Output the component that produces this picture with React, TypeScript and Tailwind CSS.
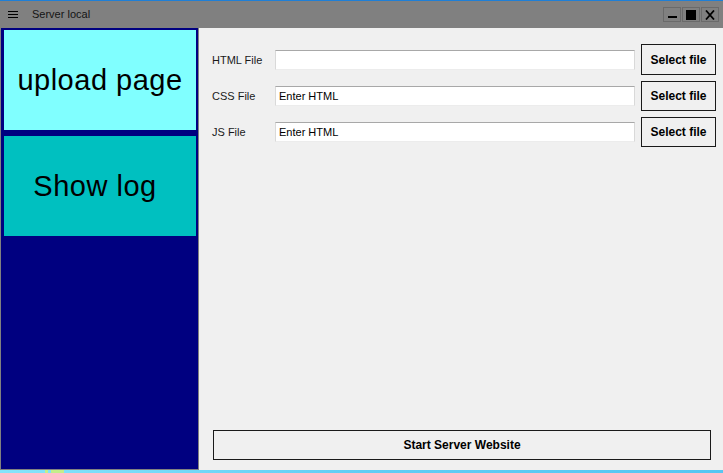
import React from "react";

function Row({ label, value, h }: { label: string; value?: string; h: string }) {
  return (
    <div className={"flex items-center " + h}>
      <div className="w-[63px] text-[11px] text-[#1a1a1a] leading-none pt-[1px]">{label}</div>
      <div className="w-[360px] h-[20px] bg-white border border-t-[#a8a8a8] border-x-[#d9d9d9] border-b-[#ececec] flex items-center pl-[3px] text-[11px] text-black leading-none">
        {value}
      </div>
      <button className="ml-[6px] w-[75px] h-full border border-[#1a1a1a] bg-[#f0f0f0] text-[12px] font-bold text-black leading-none">
        Select file
      </button>
    </div>
  );
}

export default function App() {
  return (
    <div
      className="w-[723px] h-[473px] flex flex-col bg-[#f0f0f0] overflow-hidden"
      style={{ fontFamily: '"Liberation Sans", Arial, sans-serif' }}
    >
      <div className="h-[1px] bg-[#1f7fd6]" />
      {/* Title bar */}
      <div className="h-[27px] bg-[#808080] flex items-center relative">
        <div className="ml-[8px] w-[10px] flex flex-col gap-[2px]">
          <div className="h-[1px] bg-black" />
          <div className="h-[1px] bg-black" />
          <div className="h-[1px] bg-black" />
        </div>
        <div className="ml-[14px] text-[11px] text-[#141414] leading-none">Server local</div>
        <div className="ml-auto mr-[4px] flex gap-[1px] self-start mt-[6px]">
          <div className="w-[18px] h-[15px] border border-[#6a6a6a] flex items-end justify-center pb-[3px]">
            <div className="w-[9px] h-[2px] bg-black" />
          </div>
          <div className="w-[18px] h-[15px] border border-[#6a6a6a] flex items-center justify-center">
            <div className="w-[10px] h-[10px] bg-black" />
          </div>
          <div className="w-[18px] h-[15px] border border-[#6a6a6a] flex items-center justify-center">
            <svg width="10" height="10" viewBox="0 0 10 10">
              <path d="M1 0.5 L9 9.5 M9 0.5 L1 9.5" stroke="#000" strokeWidth="1.8" />
            </svg>
          </div>
        </div>
      </div>
      {/* Body */}
      <div className="flex h-[442px]">
        <div className="w-[199px] h-full bg-[#000080] border-x border-b border-[#808080] pt-[2px] pl-[3px] pr-[2px] flex flex-col gap-[6px]">
          <div className="h-[100px] bg-[#80ffff] flex items-center justify-center text-[29px] tracking-[0.5px] text-black leading-none">
            upload page
          </div>
          <div className="h-[100px] bg-[#00c0c0] flex items-center justify-center pr-[10px] text-[29px] tracking-[0.5px] text-black leading-none">
            Show log
          </div>
        </div>
        <div className="flex-1 flex flex-col pl-[13px] pt-[16px] pb-[10px]">
          <div className="flex flex-col gap-[6px]">
            <Row label="HTML File" h="h-[31px]" />
            <Row label="CSS File" value="Enter HTML" h="h-[30px]" />
            <Row label="JS File" value="Enter HTML" h="h-[30px]" />
          </div>
          <button className="mt-auto ml-[1px] w-[498px] h-[30px] border border-[#1a1a1a] bg-[#f0f0f0] text-[12px] font-bold text-black leading-none">
            Start Server Website
          </button>
        </div>
      </div>
      {/* Bottom strip */}
      <div className="h-[3px] flex bg-gradient-to-r from-[#86e4fa] via-[#62cdf4] to-[#56c6f2]">
        <div className="w-[45px]" />
        <div className="w-[3px] bg-[#c4ee8a]" />
        <div className="w-[3px]" />
        <div className="w-[13px] bg-[#c4ee8a]" />
      </div>
    </div>
  );
}
